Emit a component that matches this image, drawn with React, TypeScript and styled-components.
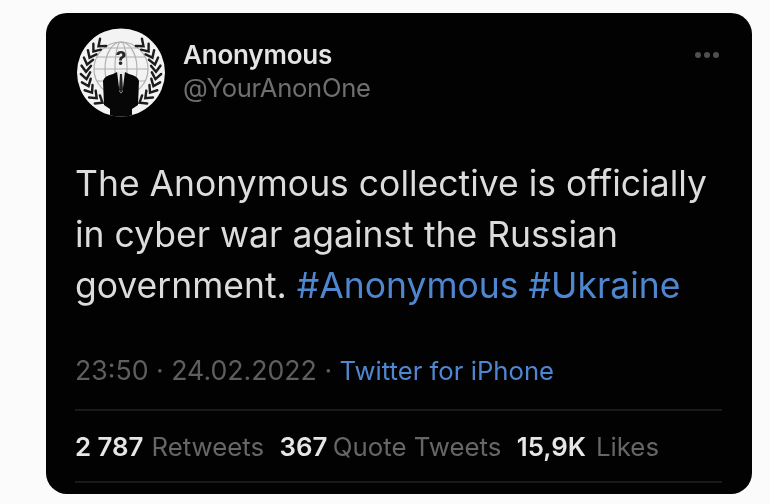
import React from "react";
import styled, { createGlobalStyle } from "styled-components";

const Global = createGlobalStyle`
  html, body { margin: 0; padding: 0; background: #fbfbfb; }
  body { width: 770px; height: 504px; overflow: hidden; font-family: "Inter", "Liberation Sans", sans-serif; }
`;

const Page = styled.div`
  width: 770px;
  height: 504px;
  padding: 13px 18px 10px 46px;
  box-sizing: border-box;
`;

const Card = styled.article`
  height: 481px;
  box-sizing: border-box;
  background: #020202;
  border-radius: 21px;
  padding: 14px 30px 0 29px;
  display: flex;
  flex-direction: column;
  filter: blur(0.4px);
`;

const Header = styled.header`
  display: flex;
  align-items: flex-start;
  height: 91px;
`;

const Avatar = styled.svg`
  width: 88px;
  height: 91px;
  flex: none;
  margin-left: 2px;
  filter: blur(0.5px);
`;

const Names = styled.div`
  display: flex;
  flex-direction: column;
  margin-left: 18px;
  padding-top: 13px;
  flex: 1;
`;

const Name = styled.span`
  color: #e4e4e4;
  font-size: 26px;
  font-weight: 600;
  line-height: 30px;
  letter-spacing: -0.2px;
`;

const Handle = styled.span`
  color: #6f6f6f;
  font-size: 25.6px;
  line-height: 36px;
  letter-spacing: -0.3px;
`;

const Dots = styled.div`
  display: flex;
  gap: 3px;
  margin-top: 25px;
  margin-right: 3px;
`;

const Dot = styled.i`
  width: 6px;
  height: 6px;
  border-radius: 50%;
  background: #505050;
`;

const Body = styled.p`
  margin: 40px 0 0;
  color: #dcdcdc;
  font-size: 35.5px;
  font-weight: 380;
  line-height: 51px;
  white-space: nowrap;
`;

const Tag = styled.span`
  color: #4f86d0;
`;

const Meta = styled.div`
  margin-top: 41.5px;
  font-size: 26.7px;
  line-height: 34px;
  color: #5e5e5e;
  white-space: nowrap;
`;

const Source = styled(Tag)`
  font-size: 25.7px;
`;

const Rule = styled.hr<{ $top: number }>`
  border: 0;
  height: 2px;
  background: #191919;
  margin: ${p => p.$top}px 0 0;
`;

const Stats = styled.div`
  display: flex;
  align-items: baseline;
  gap: 15.5px;
  height: 70px;
  padding-top: 20px;
  box-sizing: border-box;
  font-size: 25.8px;
  white-space: nowrap;
`;

const Stat = styled.span<{ $space: number }>`
  color: #666;
  b {
    color: #e6e6e6;
    font-weight: 600;
    margin-right: ${p => p.$space}px;
  }
`;

const Laurel = () => {
  const steps = [0, 1, 2, 3, 4, 5, 6, 7, 8, 9];
  return (
    <g fill="none" stroke="#1c1c1c" strokeWidth="2.5" strokeLinecap="round">
      {steps.map(i => {
        const deg = 130 + i * 12;
        const a = (deg * Math.PI) / 180;
        const x = 44 + 35 * Math.cos(a);
        const y = 46 - 35 * Math.sin(a);
        return (
          <path
            key={i}
            d="M-6 -5L0 0L-6 5"
            transform={`translate(${x} ${y}) rotate(${-deg - 90}) scale(1 0.95)`}
          />
        );
      })}
    </g>
  );
};

const Emblem = () => (
  <Avatar viewBox="0 0 88 91" aria-hidden="true">
    <defs>
      <clipPath id="disc"><circle cx="44" cy="45.5" r="44" /></clipPath>
    </defs>
    <circle cx="44" cy="45.5" r="44" fill="#f3f3f3" />
    <g clipPath="url(#disc)">
      <g fill="none" stroke="#b0b0b0" strokeWidth="1.2">
        <circle cx="44" cy="42" r="27" />
        <ellipse cx="44" cy="42" rx="16" ry="27" />
        <ellipse cx="44" cy="42" rx="6" ry="27" />
        <path d="M17 42h54M20 30h48M20 54h48M27 21h34" />
      </g>
      <Laurel />
      <g transform="translate(88 0) scale(-1 1)"><Laurel /></g>
      <path d="M33 91L33 82L27 78L26 54Q27 49 36 47L40 45L44 48L48 45L52 47Q61 49 62 54L61 78L55 82L55 91Z" fill="#070707" />
      <path d="M40 44.5h8l-2.5 20-1.5 2-1.5-2z" fill="#e8e8e8" />
      <path d="M43 47h2l1 16-2 3-2-3z" fill="#222" />
    </g>
    <text x="44" y="38" textAnchor="middle" fontSize="19" fontWeight="800" fontFamily="Inter, sans-serif" fill="#2a2a2a">?</text>
  </Avatar>
);

export default function App() {
  return (
    <>
      <Global />
      <Page>
        <Card>
          <Header>
            <Emblem />
            <Names>
              <Name>Anonymous</Name>
              <Handle>@YourAnonOne</Handle>
            </Names>
            <Dots><Dot /><Dot /><Dot /></Dots>
          </Header>
          <Body>
            The Anonymous collective is officially<br />
            in cyber war against the Russian<br />
            government. <Tag>#Anonymous</Tag> <Tag>#Ukraine</Tag>
          </Body>
          <Meta>23:50 · 24.02.2022 · <Source>Twitter for iPhone</Source></Meta>
          <Rule $top={21} />
          <Stats>
            <Stat $space={8}><b>2 787</b>Retweets</Stat>
            <Stat $space={5.5}><b>367</b>Quote Tweets</Stat>
            <Stat $space={10}><b>15,9K</b>Likes</Stat>
          </Stats>
          <Rule $top={0} />
        </Card>
      </Page>
    </>
  );
}
